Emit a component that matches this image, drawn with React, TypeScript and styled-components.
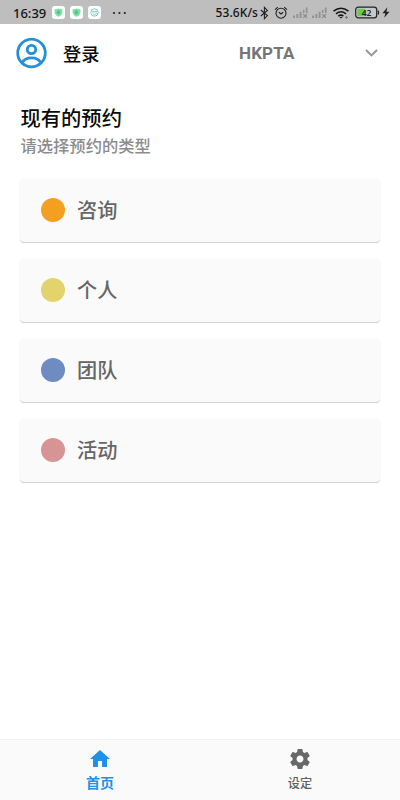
import React from "react";
import styled, { createGlobalStyle } from "styled-components";

const GlobalStyle = createGlobalStyle`
  *, *::before, *::after { box-sizing: border-box; }
  body {
    margin: 0;
    background: #fff;
    font-family: Roboto, "Noto Sans CJK SC", sans-serif;
  }
  svg { display: block; flex: none; }
`;

const Screen = styled.div`
  width: 400px;
  height: 800px;
  display: flex;
  flex-direction: column;
  overflow: hidden;
  background: #fff;
`;

const StatusBar = styled.header`
  height: 24px;
  flex: none;
  display: flex;
  align-items: center;
  padding: 1px 9px 0 13px;
  background: #bebebe;
  color: #111;
`;

const Clock = styled.span`
  width: 39px;
  font: 500 13px/16px "Noto Sans", sans-serif;
`;

const AppBadges = styled.div`
  display: flex;
  gap: 5px;
  flex: 1;
  align-items: center;
`;

const Badge = styled.span`
  width: 13px;
  height: 13px;
  border-radius: 3px;
  background: #fff;
  display: grid;
  place-items: center;
`;

const MoreDots = styled.svg`
  margin-left: 6px;
`;

const Speed = styled.span`
  font: 500 12px/16px "Noto Sans", sans-serif;
  letter-spacing: 0.08px;
  margin-right: 1px;
`;

const StatusIcons = styled.div`
  display: flex;
  align-items: center;
`;

const Header = styled.div`
  height: 58px;
  flex: none;
  display: flex;
  align-items: center;
  padding: 0 21px 0 16px;
`;

const LoginLabel = styled.span`
  margin-left: 16px;
  width: 176px;
  font-size: 18.3px;
  font-weight: 500;
  line-height: 26px;
  color: #0a0a0a;
  font-family: "Noto Sans CJK SC", sans-serif;
`;

const OrgSelect = styled.div`
  flex: 1;
  display: flex;
  align-items: center;
  justify-content: space-between;
  font-size: 17px;
  font-weight: 700;
  line-height: 24px;
  letter-spacing: 0.15px;
  color: #757575;
`;

const Main = styled.main`
  flex: 1;
  padding: 21px 20px 0;
  font-family: "Noto Sans CJK SC", sans-serif;
`;

const Title = styled.h1`
  margin: 0 0 1px;
  padding-left: 0.5px;
  font-size: 20.3px;
  font-weight: 500;
  line-height: 28px;
  color: #0a0a0a;
`;

const Subtitle = styled.p`
  margin: 0 0 21px;
  padding-left: 0.5px;
  font-size: 16.3px;
  font-weight: 500;
  line-height: 26px;
  color: #8c8c8c;
`;

const CardList = styled.div`
  display: flex;
  flex-direction: column;
  gap: 17px;
`;

const Card = styled.div`
  height: 63px;
  display: flex;
  align-items: center;
  gap: 12px;
  padding: 0 21px 2px;
  border-radius: 4px;
  background: #fafafa;
  color: #666;
  font-size: 20.2px;
  font-weight: 500;
  line-height: 30px;
  box-shadow: 0 1px 1px rgba(0, 0, 0, 0.19), 0 0 2px rgba(0, 0, 0, 0.03);
`;

const Dot = styled.span<{ $color: string }>`
  width: 24px;
  height: 24px;
  border-radius: 50%;
  background: ${(p) => p.$color};
`;

const TabBar = styled.nav`
  height: 61px;
  flex: none;
  display: flex;
  border-top: 1px solid #f0f0f0;
  background: #fafafa;
`;

const Tab = styled.div<{ $active?: boolean }>`
  flex: 1;
  display: flex;
  flex-direction: column;
  align-items: center;
  padding-top: 7px;
  color: ${(p) => (p.$active ? "#2090e8" : "#686868")};
`;

const TabLabel = styled.span<{ $active?: boolean }>`
  font-family: "Noto Sans CJK SC", sans-serif;
  font-size: ${(p) => (p.$active ? "14px" : "12.2px")};
  font-weight: ${(p) => (p.$active ? 700 : 500)};
  line-height: 24px;
  margin-top: ${(p) => (p.$active ? "-1px" : "0")};
  color: ${(p) => (p.$active ? "#2090e8" : "#606060")};
`;

const ShieldBadge = () => (
  <Badge>
    <svg width="9" height="9" viewBox="0 0 9 9">
      <path d="M.6 1.2Q3 1.3 4.5.4 6 1.3 8.4 1.2V4.5Q8 7.4 4.5 8.7 1 7.4.6 4.5Z" fill="#7fe0a8" />
      <path d="M4.5 2 6.4 3.8 5.6 6 4.5 6.8 3 6 2.6 3.8Z" fill="#4cc988" />
    </svg>
  </Badge>
);

const FaceBadge = () => (
  <Badge>
    <svg width="9" height="9" viewBox="0 0 9 9" fill="none" stroke="#5fc3b4" strokeWidth="0.8">
      <circle cx="4.5" cy="4.5" r="3.7" />
      <path d="M1.8 3.8H7.2M2.6 5.6Q4.5 7.6 6.4 5.6M3 2.6V3.8M6 2.6V3.8" />
    </svg>
  </Badge>
);

const Signal = ({ width }: { width: number }) => (
  <svg width={width} height="12" viewBox="0 0 15 12" fill="#949494">
    <path d="M0 8.5H2V11H0ZM3.3 7H5.3V11H3.3ZM6.6 4.7H8.6V11H6.6ZM9.9 2.8H11.4V6H9.9ZM12.8 .6H14.6V6H12.8Z" />
    <path d="M10.3 7.2 14 10.9M14 7.2 10.3 10.9" stroke="#858585" strokeWidth="1.1" />
  </svg>
);

const StatusGlyphs = () => (
  <StatusIcons>
    <svg width="10" height="14" viewBox="0 0 10 14" fill="none" stroke="#222" strokeWidth="1.1">
      <path d="M1.8 4 8.4 9.6 5.4 12.6V1.4L8.4 4.4 1.8 10" />
    </svg>
    <svg width="24" height="14" viewBox="0 0 24 14" fill="none" stroke="#222" strokeWidth="1.1">
      <circle cx="12" cy="7.2" r="5" />
      <path d="M9.8 6.2 12 8 14.2 6.2M6 3.6 8.8 1.2M18 3.6 15.2 1.2" />
    </svg>
    <Signal width={15} />
    <svg width="4" height="12" />
    <Signal width={15} />
    <svg width="28" height="14" viewBox="0 0 28 14" fill="none" stroke="#171717" strokeWidth="1.6">
      <path d="M6.5 5.2Q14 -.8 21.5 5.2M9 7.8Q14 3.8 19 7.8M11.3 10.2Q14 8 16.3 10.2" />
      <path d="M12.4 11 14 12.6 15.6 11Z" fill="#171717" stroke="none" />
      <path d="M18 11.4H21M19.5 9.9V12.9" stroke="#777" strokeWidth="1" />
    </svg>
    <svg width="25" height="13" viewBox="0 0 25 13">
      <rect x=".7" y="1.2" width="21" height="10.6" rx="2.6" fill="#c8c8c8" stroke="#222" strokeWidth="1.2" />
      <path d="M2.3 2.8H10V10.2H2.3Z" fill="#68ce48" />
      <path d="M23 4.5Q24.2 6.5 23 8.5" fill="none" stroke="#222" strokeWidth="1.2" />
      <text x="11.5" y="9.6" textAnchor="middle" fontFamily="Noto Sans" fontSize="8.5" fontWeight="600" fill="#222">42</text>
    </svg>
    <svg width="11" height="13" viewBox="0 0 11 13" fill="#222">
      <path d="M7.4 1.2 2.4 7.3H5.4L4.2 11.8 9.5 5.7H6.4Z" />
    </svg>
  </StatusIcons>
);

const appointmentTypes = [
  { label: "咨询", color: "#f59f20" },
  { label: "个人", color: "#e2d36c" },
  { label: "团队", color: "#6e8bc2" },
  { label: "活动", color: "#d69494" },
];

export default function App() {
  return (
    <Screen>
      <GlobalStyle />
      <StatusBar>
        <Clock>16:39</Clock>
        <AppBadges>
          <ShieldBadge />
          <ShieldBadge />
          <FaceBadge />
          <MoreDots width="15" height="4" viewBox="0 0 15 4" fill="#222">
            <circle cx="2" cy="2" r="1.1" />
            <circle cx="7.4" cy="2" r="1.1" />
            <circle cx="12.8" cy="2" r="1.1" />
          </MoreDots>
        </AppBadges>
        <Speed>53.6K/s</Speed>
        <StatusGlyphs />
      </StatusBar>
      <Header>
        <svg width="31" height="31" viewBox="0 0 31 31" fill="none" stroke="#258fd8" strokeWidth="2.8">
          <circle cx="15.5" cy="15" r="13.8" />
          <circle cx="15.5" cy="11.5" r="4.2" />
          <path d="M6.5 24.5Q8.5 19.8 15.5 19.8T24.5 24.5" />
        </svg>
        <LoginLabel>登录</LoginLabel>
        <OrgSelect>
          HKPTA
          <svg width="15" height="10" viewBox="0 0 15 10" fill="none" stroke="#949494" strokeWidth="1.9">
            <path d="M2 2 7.5 7.5 13 2" />
          </svg>
        </OrgSelect>
      </Header>
      <Main>
        <Title>现有的预约</Title>
        <Subtitle>请选择预约的类型</Subtitle>
        <CardList>
          {appointmentTypes.map((type) => (
            <Card key={type.label}>
              <Dot $color={type.color} />
              <span>{type.label}</span>
            </Card>
          ))}
        </CardList>
      </Main>
      <TabBar>
        <Tab $active>
          <svg width="24" height="24" viewBox="0 0 24 24" fill="currentColor">
            <path d="M10 20v-6h4v6h5v-8h3L12 3 2 12h3v8z" />
          </svg>
          <TabLabel $active>首页</TabLabel>
        </Tab>
        <Tab>
          <svg width="24" height="24" viewBox="0 0 24 24" fill="currentColor">
            <path d="M19.43 12.98c.04-.32.07-.64.07-.98s-.03-.66-.07-.98l2.11-1.65c.19-.15.24-.42.12-.64l-2-3.46c-.12-.22-.39-.3-.61-.22l-2.49 1c-.52-.4-1.08-.73-1.69-.98l-.38-2.65C14.46 2.18 14.25 2 14 2h-4c-.25 0-.46.18-.49.42l-.38 2.65c-.61.25-1.17.59-1.69.98l-2.49-1c-.23-.09-.49 0-.61.22l-2 3.46c-.13.22-.07.49.12.64l2.11 1.65c-.04.32-.07.65-.07.98s.03.66.07.98l-2.11 1.65c-.19.15-.24.42-.12.64l2 3.46c.12.22.39.3.61.22l2.49-1c.52.4 1.08.73 1.69.98l.38 2.65c.03.24.24.42.49.42h4c.25 0 .46-.18.49-.42l.38-2.65c.61-.25 1.17-.59 1.69-.98l2.49 1c.23.09.49 0 .61-.22l2-3.46c.12-.22.07-.49-.12-.64l-2.11-1.65zM12 15.5c-1.93 0-3.5-1.57-3.5-3.5s1.57-3.5 3.5-3.5 3.5 1.57 3.5 3.5-1.57 3.5-3.5 3.5z" />
          </svg>
          <TabLabel>设定</TabLabel>
        </Tab>
      </TabBar>
    </Screen>
  );
}
